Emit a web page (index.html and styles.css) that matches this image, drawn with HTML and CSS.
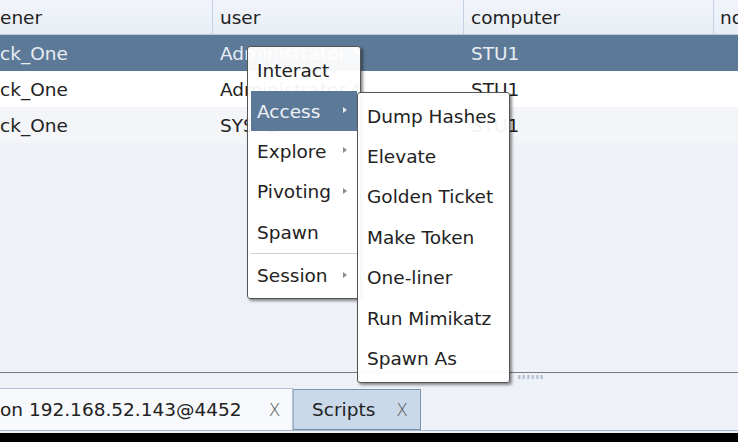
FILE: index.html
```html
<!DOCTYPE html>
<html lang="en">
<head>
  <meta charset="UTF-8" />
  <title>Sessions</title>
  <link rel="stylesheet" href="styles.css">
</head>
<body>
  <!-- Session table -->
  <div class="table">
    <div class="row head">
      <div class="cell first">ener</div>
      <div class="cell">user</div>
      <div class="cell">computer</div>
      <div class="cell">no</div>
    </div>
    <div class="row selected">
      <div class="cell first">ck_One</div>
      <div class="cell">Administrator *</div>
      <div class="cell">STU1</div>
      <div class="cell"></div>
    </div>
    <div class="row">
      <div class="cell first">ck_One</div>
      <div class="cell">Administrator *</div>
      <div class="cell">STU1</div>
      <div class="cell"></div>
    </div>
    <div class="row alt">
      <div class="cell first">ck_One</div>
      <div class="cell">SYSTEM *</div>
      <div class="cell">STU1</div>
      <div class="cell"></div>
    </div>
  </div>

  <!-- Split pane divider -->
  <div class="splitter"><span class="grip"></span></div>

  <!-- Bottom tabs -->
  <div class="tabs">
    <div class="tab">on 192.168.52.143@4452 <span class="close">X</span></div>
    <div class="tab active">Scripts <span class="close">X</span></div>
  </div>
  <div class="statusbar"></div>

  <!-- Context menu -->
  <div class="menu main-menu">
    <div class="item">Interact</div>
    <div class="item sub hover">Access</div>
    <div class="item sub">Explore</div>
    <div class="item sub">Pivoting</div>
    <div class="item">Spawn</div>
    <div class="sep"></div>
    <div class="item sub">Session</div>
  </div>

  <!-- Access submenu -->
  <div class="menu sub-menu">
    <div class="item">Dump Hashes</div>
    <div class="item">Elevate</div>
    <div class="item">Golden Ticket</div>
    <div class="item">Make Token</div>
    <div class="item">One-liner</div>
    <div class="item">Run Mimikatz</div>
    <div class="item">Spawn As</div>
  </div>
</body>
</html>
```

FILE: styles.css
```css
/* Basic resets & layout */
html, body {
  margin: 0;
  padding: 0;
  width: 100%;
  height: 100%;
  overflow: hidden;
}
body {
  display: flex;
  flex-direction: column;
  background-color: #eef1f8;
  color: #222;
  font-family: "DejaVu Sans", "Liberation Sans", sans-serif;
  font-size: 18.5px;
  position: relative;
}

/* Table */
.table {
  flex: 1;
}
.row {
  display: grid;
  grid-template-columns: 213px 251px 250px 1fr;
  height: 36px;
  background: #fff;
}
.row.alt {
  background: #f4f5f8;
}
.row.selected {
  background: #5c7998;
  color: #e9edf3;
}
.row.head {
  height: 34px;
  background: linear-gradient(#f1f4fa, #e9eef6);
  border-bottom: 1px solid #bccbdd;
  color: #222;
}
.cell {
  display: flex;
  align-items: center;
  padding-left: 7px;
  white-space: nowrap;
  overflow: hidden;
}
.cell.first {
  padding-left: 0;
}
.head .cell {
  border-right: 1px solid #c4d2e4;
}
.head .cell:last-child {
  border-right: none;
  padding-left: 6px;
}

/* Splitter */
.splitter {
  height: 15px;
  border-top: 1px solid #7c7c7c;
  padding-left: 517px;
}
.grip {
  display: block;
  width: 27px;
  height: 4px;
  margin-top: 2px;
  background-image: radial-gradient(circle, #a8b6c9 35%, transparent 50%);
  background-size: 4.5px 2px;
}

/* Tabs */
.tabs {
  display: flex;
  height: 42px;
  border-bottom: 1px solid #a5b5c9;
}
.tab {
  display: flex;
  align-items: center;
  background: #f7f9fc;
  border-top: 1px solid #b4c2d3;
  border-right: 1px solid #b4c2d3;
  width: 293px;
  box-sizing: border-box;
}
.tab.active {
  width: 128px;
  padding-left: 18px;
  margin-top: 1px;
  background: #c9d9ea;
  border: 1px solid #7d93ad;
  border-left-color: #9fb1c6;
}
.close {
  margin-left: 27px;
  font-size: 17px;
  font-weight: 200;
  color: #555;
}
.tab.active .close {
  margin-left: 21px;
}
.statusbar {
  height: 2px;
  border-bottom: 9px solid #000;
}

/* Popup menus */
.menu {
  position: absolute;
  background: rgba(255, 255, 255, 0.95);
  border: 1px solid #555;
  border-radius: 3px;
  box-shadow: 2px 2px 3px rgba(0, 0, 0, 0.45);
  color: #222;
}
.main-menu {
  left: 247px;
  top: 46px;
  width: 106px;
  padding: 3.5px 3px 2px 3px;
}
.sub-menu {
  left: 357px;
  top: 92px;
  width: 145px;
  padding: 3px;
  z-index: 2;
}
.item {
  height: 40.4px;
  display: flex;
  align-items: center;
  padding-left: 6px;
  position: relative;
  white-space: nowrap;
}
.item.hover {
  background: #5c7998;
  color: #eef2f7;
}
.item.sub::after {
  content: "";
  position: absolute;
  right: 10px;
  top: 50%;
  margin-top: -4px;
  border-left: 4px solid #8a8a8a;
  border-top: 3.5px solid transparent;
  border-bottom: 3.5px solid transparent;
}
.item.hover::after {
  border-left-color: #e6ebf2;
}
.sep {
  height: 1px;
  background: #cfcfcf;
  margin: 1px 0 1px 0;
}
```
